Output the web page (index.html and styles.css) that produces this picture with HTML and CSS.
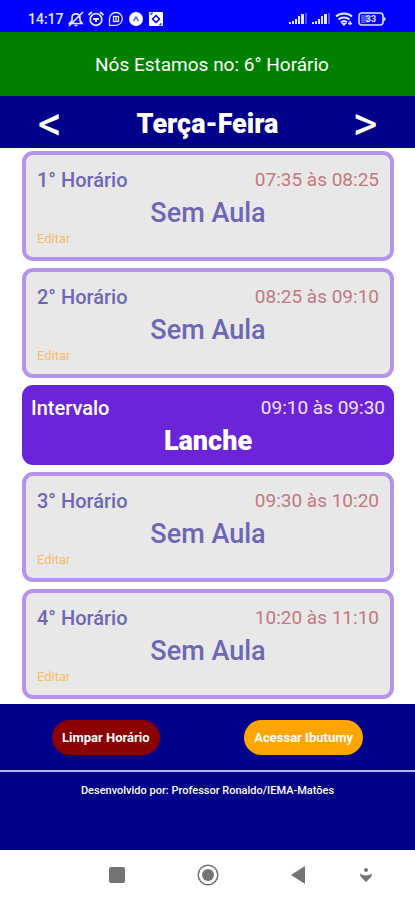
FILE: index.html
```html
<!DOCTYPE html>
<html lang="pt-BR">
<head>
  <meta charset="UTF-8">
  <meta name="viewport" content="width=device-width, initial-scale=1.0">
  <title>Horário</title>
  <link rel="stylesheet" href="styles.css">
</head>
<body>
  <div class="status-bar">
    <div class="status-left">
      <span class="clock">14:17</span>
      <svg width="16" height="16" viewBox="0 0 16 16" fill="none" stroke="currentColor" stroke-width="1.7">
        <path d="M1.500 12.500h12.500l-2-3V7c0-2.500-1.600-4.200-4-4.200S4 4.500 4 7v2.500zM6.500 14.500h3M15 1L1 15"/>
      </svg>
      <svg width="16" height="16" viewBox="0 0 16 16" fill="none" stroke="currentColor" stroke-width="1.800">
        <circle cx="8" cy="8.500" r="5.800"/>
        <path d="M.5 4l3.500-3M15.500 4L12 1M5 8h6M7 10h2"/>
      </svg>
      <svg width="16" height="16" viewBox="0 0 16 16" fill="none" stroke="currentColor" stroke-width="1.300">
        <path d="M1.500 14.300V8A6.400 6.400 0 1 1 8 14.300z"/>
        <rect x="5.500" y="5.500" width="5" height="5"/>
        <path d="M8 5.500v5"/>
      </svg>
      <svg width="16" height="16" viewBox="0 0 16 16">
        <circle cx="8" cy="8" r="7" fill="#fff"/>
        <path d="M5.500 10L8 6l2.500 4" fill="none" stroke="#5b5bff" stroke-width="1.500"/>
      </svg>
      <svg width="16" height="16" viewBox="0 0 16 16">
        <rect x="1" y="1" width="14" height="14" rx="1" fill="#fff"/>
        <path d="M8 4.500L11.500 8 8 11.500 4.500 8z" fill="none" stroke="#0000ff" stroke-width="1.500"/>
        <path d="M4 1v2H2M12 15v-2h2" fill="none" stroke="#0000ff"/>
      </svg>
    </div>
    <div class="status-right">
      <svg width="18" height="14" viewBox="0 0 18 14" fill="currentColor">
        <path d="M0 10h2v2H0zM3 9h2v3H3zM6 7h2v5H6zM9 4h2v8H9zM12 2h3v10h-3z"/>
        <path d="M16 1h2v11h-2z" opacity=".35"/>
      </svg>
      <svg width="18" height="14" viewBox="0 0 18 14" fill="currentColor">
        <path d="M0 10h2v2H0zM3 9h2v3H3zM6 7h2v5H6zM9 4h2v8H9zM12 2h3v10h-3z"/>
        <path d="M16 1h2v11h-2z" opacity=".35"/>
      </svg>
      <svg width="18" height="14" viewBox="0 0 18 14" fill="none" stroke="currentColor" stroke-width="2">
        <path d="M1 4.500c4.500-4 11.500-4 16 0M3.500 7.500c3.200-2.800 7.800-2.800 11 0M6 10.200c1.800-1.500 4.200-1.500 6 0"/>
        <path d="M7.500 11.500h3L9 13zM15 9v4M13 11.500h4" stroke-width="1.500"/>
      </svg>
      <svg width="28" height="14" viewBox="0 0 28 14">
        <rect x="1" y="1" width="24" height="12" rx="3" fill="none" stroke="currentColor" stroke-width="1.500"/>
        <path d="M25.500 4L28 7l-2.500 3z" fill="currentColor"/>
        <rect x="3" y="3" width="8" height="8" fill="currentColor" opacity=".35"/>
        <text class="battery-text" x="13" y="10" text-anchor="middle">33</text>
      </svg>
    </div>
  </div>

  <header class="current">Nós Estamos no: 6° Horário</header>

  <div class="day-bar">
    <button class="arrow" aria-label="Dia anterior">&lt;</button>
    <h1 class="day">Terça-Feira</h1>
    <button class="arrow" aria-label="Próximo dia">&gt;</button>
  </div>

  <main class="schedule">
    <section class="card">
      <div class="card-top">
        <span class="slot">1° Horário</span>
        <span class="time">07:35 às 08:25</span>
      </div>
      <h2 class="subject">Sem Aula</h2>
      <button class="edit">Editar</button>
    </section>
    <section class="card">
      <div class="card-top">
        <span class="slot">2° Horário</span>
        <span class="time">08:25 às 09:10</span>
      </div>
      <h2 class="subject">Sem Aula</h2>
      <button class="edit">Editar</button>
    </section>
    <section class="card break">
      <div class="card-top">
        <span class="slot">Intervalo</span>
        <span class="time">09:10 às 09:30</span>
      </div>
      <h2 class="subject">Lanche</h2>
    </section>
    <section class="card">
      <div class="card-top">
        <span class="slot">3° Horário</span>
        <span class="time">09:30 às 10:20</span>
      </div>
      <h2 class="subject">Sem Aula</h2>
      <button class="edit">Editar</button>
    </section>
    <section class="card">
      <div class="card-top">
        <span class="slot">4° Horário</span>
        <span class="time">10:20 às 11:10</span>
      </div>
      <h2 class="subject">Sem Aula</h2>
      <button class="edit">Editar</button>
    </section>
  </main>

  <footer class="footer">
    <div class="actions">
      <button class="pill clear">Limpar Horário</button>
      <button class="pill access">Acessar Ibutumy</button>
    </div>
    <p class="credits">Desenvolvido por: Professor Ronaldo/IEMA-Matões</p>
  </footer>

  <nav class="nav-bar">
    <button class="nav-button" aria-label="Recentes">
      <svg width="16" height="16" viewBox="0 0 16 16"><rect width="16" height="16" rx="2" fill="currentColor"/></svg>
    </button>
    <button class="nav-button" aria-label="Início">
      <svg width="22" height="22" viewBox="0 0 22 22">
        <circle cx="11" cy="11" r="9.800" fill="none" stroke="currentColor" stroke-width="1.500"/>
        <circle cx="11" cy="11" r="6" fill="currentColor"/>
      </svg>
    </button>
    <button class="nav-button" aria-label="Voltar">
      <svg width="16" height="18" viewBox="0 0 16 18"><path d="M14 0v18L0 9z" fill="currentColor"/></svg>
    </button>
    <button class="nav-button" aria-label="Acessibilidade">
      <svg width="12" height="14" viewBox="0 0 12 14" fill="currentColor">
        <circle cx="6" cy="2" r="2"/>
        <path d="M0 5.500c3.500 2.500 8.500 2.500 12 0l-.5 3L6 14 .5 8.500z"/>
      </svg>
    </button>
  </nav>
</body>
</html>
```
FILE: styles.css
```css
* {
  box-sizing: border-box;
}

body {
  margin: 0;
  min-height: 100vh;
  display: flex;
  flex-direction: column;
  background-color: #fff;
  font-family: Roboto, sans-serif;
}

button {
  font-family: inherit;
  border: none;
  padding: 0;
  background: none;
  cursor: pointer;
}

svg {
  display: block;
}

.status-bar {
  display: flex;
  justify-content: space-between;
  align-items: center;
  height: 32px;
  padding: 6px 29px 0 28px;
  background-color: #0000ff;
  color: #e4e4ff;
}

.status-left {
  display: flex;
  align-items: center;
  gap: 4px;
}

.status-right {
  display: flex;
  align-items: center;
  gap: 5px;
}

.clock {
  font-size: 14px;
  font-weight: 500;
}

.battery-text {
  font-size: 9px;
  font-weight: bold;
  fill: currentColor;
}

.current {
  height: 64px;
  line-height: 66px;
  padding-left: 9px;
  text-align: center;
  background-color: #008000;
  color: #fff;
  font-size: 19px;
}

.day-bar {
  display: flex;
  justify-content: space-between;
  align-items: center;
  height: 52px;
  padding: 4px 34px 0;
  background-color: #00008b;
  color: #fff;
}

.arrow {
  width: 32px;
  line-height: 48px;
  color: #fff;
  font-size: 48px;
}

.day {
  margin: 0;
  font-size: 27px;
  font-weight: 900;
}

.schedule {
  display: flex;
  flex-direction: column;
  gap: 7px;
  padding: 3px 21px 5px 22px;
}

.card {
  height: 110px;
  padding: 13px 11px 0;
  border: 4px solid #b593ea;
  border-radius: 11px;
  background-color: #e8e8e8;
  color: #6d67b4;
}

.card-top {
  display: flex;
  justify-content: space-between;
  font-size: 20px;
  line-height: 24px;
}

.slot {
  font-weight: 500;
}

.time {
  color: #c27880;
  font-size: 19px;
}

.subject {
  margin: 5px 0 0;
  text-align: center;
  font-size: 27px;
  line-height: 32px;
  font-weight: 500;
}

.edit {
  display: block;
  color: #f5bd68;
  font-size: 13px;
  line-height: 20px;
}

.break {
  height: 80px;
  padding: 11px 9px 0;
  border: none;
  background-color: #6c24d9;
  color: #fff;
}

.break .time {
  color: #f0e4ff;
}

.break .subject {
  font-weight: 900;
}

.footer {
  flex: 1;
  background-color: #00008b;
  color: #fff;
}

.actions {
  display: flex;
  justify-content: space-between;
  align-items: center;
  height: 68px;
  padding: 0 52px;
  border-bottom: 2px solid #b4b4e6;
}

.pill {
  height: 35px;
  padding: 0 10px;
  border-radius: 18px;
  color: #fff;
  font-size: 13px;
  font-weight: bold;
}

.clear {
  background-color: #8b0000;
}

.access {
  background-color: #ffa500;
}

.credits {
  margin: 12px 0 0;
  text-align: center;
  font-size: 11px;
  line-height: 14px;
  font-weight: 500;
}

.nav-bar {
  display: grid;
  grid-template-columns: 91fr 91fr 91fr 44fr;
  height: 50px;
  padding: 0 27px 0 71px;
}

.nav-button {
  display: flex;
  justify-content: center;
  align-items: center;
  color: #747474;
}
```
